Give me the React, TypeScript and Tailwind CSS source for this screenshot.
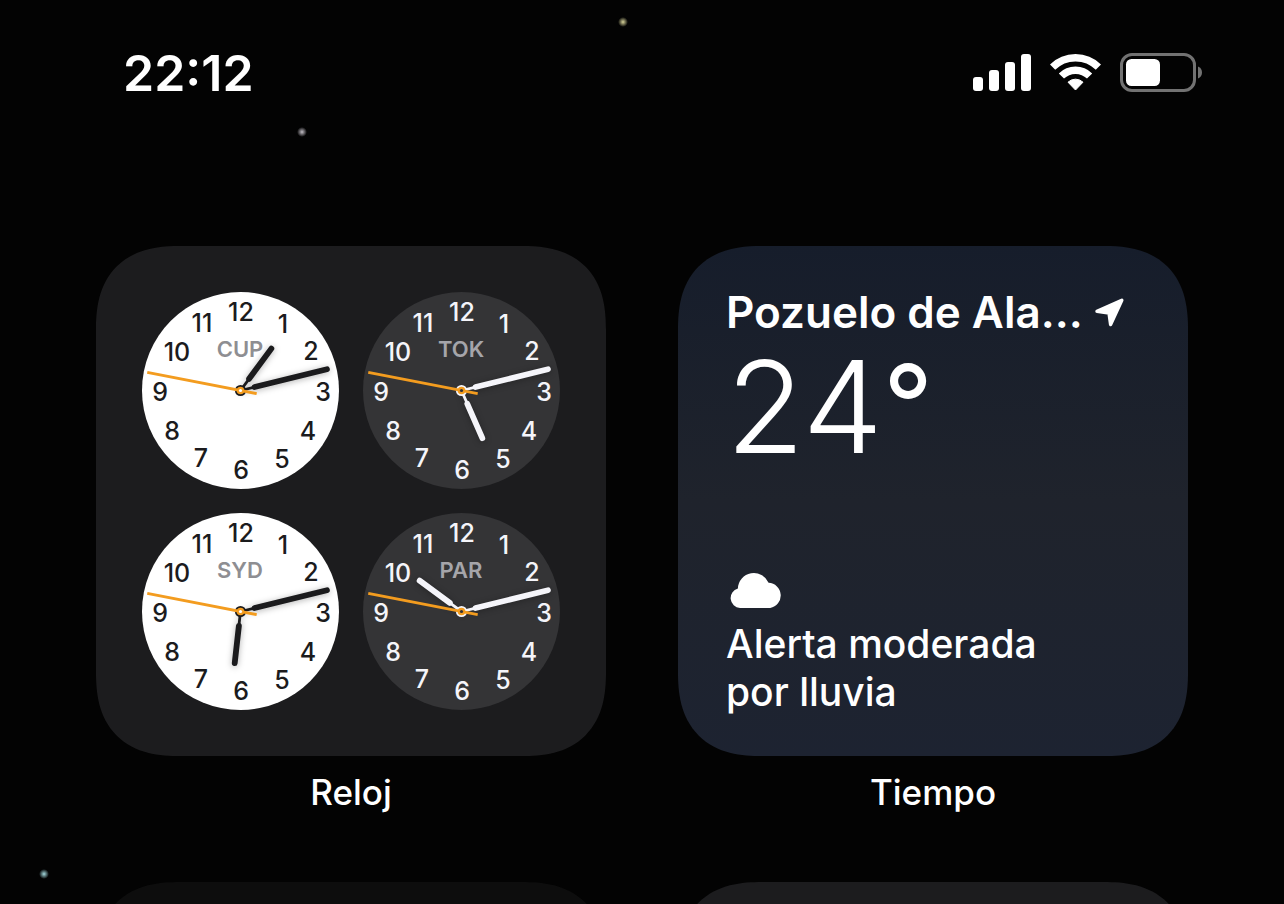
import clsx from "clsx";
import type { ReactNode } from "react";

type ClockProps = {
  city: string;
  hour: number;
  day?: boolean;
};

const MINUTES = 12 + 47 / 60;

const numerals = [
  { n: 12, x: 99, y: 20 },
  { n: 1, x: 141, y: 32 },
  { n: 2, x: 169, y: 59 },
  { n: 3, x: 181, y: 100 },
  { n: 4, x: 166, y: 139 },
  { n: 5, x: 140, y: 167 },
  { n: 6, x: 99, y: 178 },
  { n: 7, x: 59, y: 166 },
  { n: 8, x: 30, y: 139 },
  { n: 9, x: 18, y: 100 },
  { n: 10, x: 35, y: 60 },
  { n: 11, x: 60, y: 31 },
];

const cardShape =
  "aspect-square rounded-[70px] supports-[corner-shape:squircle]:rounded-[84px] supports-[corner-shape:squircle]:[corner-shape:superellipse(1.3)]";

const Hand = ({ angle, length }: { angle: number; length: number }) => (
  <g transform={`rotate(${angle} 98.5 98.5)`} stroke="currentColor" strokeLinecap="round">
    <line x1="98.5" y1="98.5" x2="98.5" y2="84" strokeWidth="2.8" />
    <line x1="98.5" y1="84" x2="98.5" y2={98.5 - length} strokeWidth="5.8" />
  </g>
);

const Clock = ({ city, hour, day }: ClockProps) => (
  <svg
    viewBox="0 0 197 197"
    role="img"
    aria-label={city}
    className={clsx("w-full font-medium", day ? "text-[#1b1b1d]" : "text-[#f5f5fa]")}
  >
    <circle cx="98.5" cy="98.5" r="98.5" fill={day ? "#ffffff" : "#343436"} />
    {numerals.map(({ n, x, y }) => (
      <text key={n} x={x} y={y + 9} fontSize="25" textAnchor="middle" fill="currentColor">
        {n}
      </text>
    ))}
    <text
      x="98"
      y="65"
      fontSize="22"
      textAnchor="middle"
      fill={day ? "#8e8e92" : "#a5a5aa"}
      className="font-semibold"
    >
      {city}
    </text>
    <g className="drop-shadow-[0_1px_3px_rgba(0,0,0,0.3)]">
      <Hand angle={(hour + MINUTES / 60) * 30} length={52} />
      <Hand angle={MINUTES * 6 - 0.5} length={89} />
    </g>
    <circle cx="98.5" cy="98.5" r="5.6" fill="currentColor" />
    <line
      x1="98.5"
      y1="115"
      x2="98.5"
      y2="3.5"
      stroke="#f39c1f"
      strokeWidth="3"
      transform="rotate(281 98.5 98.5)"
    />
    <circle cx="98.5" cy="98.5" r="3.8" fill="#f39c1f" />
    <circle cx="98.5" cy="98.5" r="1.6" fill={day ? "#ffffff" : "#343436"} />
  </svg>
);

const SignalIcon = () => (
  <svg width="58" height="38" viewBox="0 0 58 38" fill="white">
    <rect x="0" y="24" width="10" height="14" rx="3" />
    <rect x="16" y="17" width="10" height="21" rx="3" />
    <rect x="32" y="9" width="10" height="29" rx="3" />
    <rect x="48" y="1" width="10" height="37" rx="3" />
  </svg>
);

const WifiIcon = () => (
  <svg width="51" height="38" viewBox="0 0 51 38" fill="none" stroke="white" strokeWidth="7.4">
    <path d="M2.6 14.2A32.4 32.4 0 0 1 48.4 14.2" />
    <path d="M11.4 23A20 20 0 0 1 39.6 23" />
    <path
      d="M25.5 37L18 29.2A10.8 10.8 0 0 1 33 29.2Z"
      fill="white"
      strokeWidth="1"
      strokeLinejoin="round"
    />
  </svg>
);

const BatteryIcon = () => (
  <svg width="82" height="39" viewBox="0 0 82 39" fill="none">
    <rect x="1.5" y="1.5" width="73" height="36" rx="10.5" stroke="#727272" strokeWidth="3" />
    <rect x="6" y="6" width="34" height="27" rx="5.5" fill="white" />
    <path d="M78 13.5C80.6 14.4 82 16.8 82 19.5S80.6 24.6 78 25.5Z" fill="#727272" />
  </svg>
);

const LocationIcon = () => (
  <svg width="29" height="29" viewBox="0 0 29 29" className="shrink-0">
    <path
      d="M2 13.4L26.8 2.2L15.6 26.6L14 15Z"
      fill="white"
      stroke="white"
      strokeWidth="3.4"
      strokeLinejoin="round"
    />
  </svg>
);

const CloudIcon = () => (
  <svg width="53" height="35" viewBox="0 0 53 35" fill="white">
    <path d="M10 35A10 10 0 0 1 7.9 15.4A16 16 0 0 1 38.6 9.8A12.7 12.7 0 0 1 40.2 35Z" />
  </svg>
);

const Widget = ({ label, children }: { label: string; children: ReactNode }) => (
  <section className="flex flex-col gap-3.5">
    {children}
    <h2 className="text-center text-[35px] leading-[44px] font-medium">{label}</h2>
  </section>
);

export default function App() {
  return (
    <div className="relative h-screen overflow-hidden bg-[#030303] font-['Inter',sans-serif] text-white">
      <span className="absolute left-[618px] top-[17px] size-2.5 rounded-full bg-radial from-[#d8d49a] to-transparent to-70%" />
      <span className="absolute left-[297px] top-[127px] size-2.5 rounded-full bg-radial from-[#c4c0c8] to-transparent to-70%" />
      <span className="absolute left-[39px] top-[869px] size-2.5 rounded-full bg-radial from-[#a5dbe0] to-transparent to-70%" />

      <header className="flex h-[146px] items-center justify-between pr-[82px] pl-[123px]">
        <time className="text-[50px] font-semibold">22:12</time>
        <div className="flex items-center gap-[19px] pb-0.5">
          <SignalIcon />
          <WifiIcon />
          <BatteryIcon />
        </div>
      </header>

      <main className="grid grid-cols-2 gap-x-18 gap-y-17 px-24 pt-[100px]">
        <Widget label="Reloj">
          <div
            className={clsx(
              cardShape,
              "grid grid-cols-2 content-center gap-6 bg-[#1c1c1e] px-[46px]"
            )}
          >
            <Clock city="CUP" hour={1} day />
            <Clock city="TOK" hour={5} />
            <Clock city="SYD" hour={6} day />
            <Clock city="PAR" hour={10} />
          </div>
        </Widget>

        <Widget label="Tiempo">
          <div
            className={clsx(
              cardShape,
              "flex flex-col justify-between bg-linear-to-b from-[#161d2b] via-[#1f232c] to-[#1d2331] px-12 py-10"
            )}
          >
            <div>
              <div className="flex items-center gap-3">
                <p className="text-[44px] leading-[52px] font-semibold whitespace-nowrap">
                  Pozuelo de Ala…
                </p>
                <LocationIcon />
              </div>
              <p className="flex items-start font-light">
                <span className="text-[128px] leading-[138px]">24</span>
                <span className="text-[110px] leading-[132px] font-normal">°</span>
              </p>
            </div>
            <div className="flex flex-col gap-3">
              <div className="pl-1">
                <CloudIcon />
              </div>
              <p className="text-[39px] leading-[48px] font-medium">
                Alerta moderada
                <br />
                por lluvia
              </p>
            </div>
          </div>
        </Widget>

        <div className={clsx(cardShape, "bg-[#0d0d0d]")} />
        <div className={clsx(cardShape, "bg-[#1c1c1e]")} />
      </main>
    </div>
  );
}
